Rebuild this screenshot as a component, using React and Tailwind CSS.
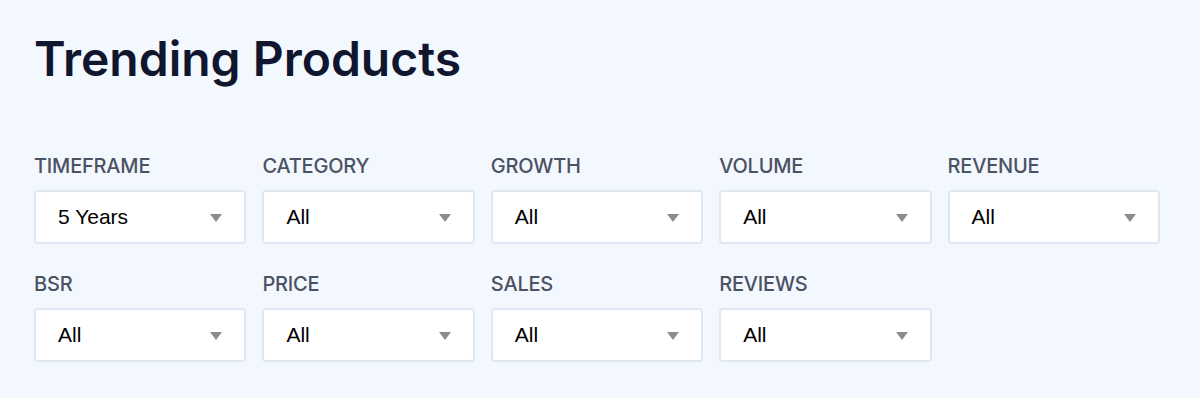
import React from 'react';

const filters = [
  { label: 'TIMEFRAME', value: '5 Years' },
  { label: 'CATEGORY', value: 'All' },
  { label: 'GROWTH', value: 'All' },
  { label: 'VOLUME', value: 'All' },
  { label: 'REVENUE', value: 'All' },
  { label: 'BSR', value: 'All' },
  { label: 'PRICE', value: 'All' },
  { label: 'SALES', value: 'All' },
  { label: 'REVIEWS', value: 'All' },
];

const Select = ({ label, value }) => (
  <div className="flex flex-col">
    <span className="text-[20px] leading-none font-medium text-[#4b5264] font-['Inter',sans-serif] tracking-[-0.2px] mb-[14px]">{label}</span>
    <div className="h-[54px] flex items-center justify-between bg-white border-2 border-[#dfe7f2] rounded-[4px] pl-[22px] pr-[22px]">
      <span className="text-[21px] text-black font-['Liberation_Sans',Arial,sans-serif]">{value}</span>
      <svg width="12" height="8" viewBox="0 0 12 8" className="mt-[2px]">
        <polygon points="0,0 12,0 6,8" fill="#8c8c8c" />
      </svg>
    </div>
  </div>
);

const App = () => {
  return (
    <div className="w-[1200px] h-[398px] bg-[#f3f8fe] pl-[34px] pr-[40px] pt-[35px] overflow-hidden">
      <h1 className="text-[48px] leading-[48px] font-semibold text-[#11162f] font-['Inter',sans-serif]">Trending Products</h1>
      <div className="grid grid-cols-5 gap-x-[16px] gap-y-[30px] mt-[73px]">
        {filters.map((f) => (
          <Select key={f.label} label={f.label} value={f.value} />
        ))}
      </div>
    </div>
  );
};

export default App;
